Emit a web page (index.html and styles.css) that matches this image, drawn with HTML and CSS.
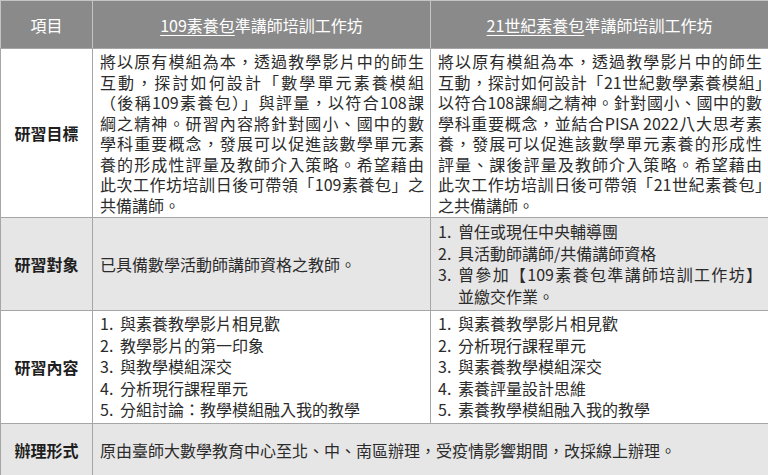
FILE: index.html
```html
<!DOCTYPE html>
<html lang="zh-Hant">
<head>
<meta charset="utf-8">
<title>素養包準講師培訓工作坊</title>
<link rel="stylesheet" href="styles.css">
</head>
<body>
<table class="grid">
  <colgroup>
    <col class="c-label">
    <col class="c-main">
    <col class="c-main">
  </colgroup>
  <thead>
    <tr class="r-head">
      <th>項目</th>
      <th><span class="ul">109素養包</span>準講師培訓工作坊</th>
      <th><span class="ul">21世紀素養包</span>準講師培訓工作坊</th>
    </tr>
  </thead>
  <tbody>
    <tr class="r-goal">
      <td class="label">研習目標</td>
      <td class="para">
        <span class="ln">將以原有模組為本，透過教學影片中的師生</span>
        <span class="ln">互動，探討如何設計「數學單元素養模組</span>
        <span class="ln">（後稱109素養包）」與評量，以符合108課</span>
        <span class="ln">綱之精神。研習內容將針對國小、國中的數</span>
        <span class="ln">學科重要概念，發展可以促進該數學單元素</span>
        <span class="ln">養的形成性評量及教師介入策略。希望藉由</span>
        <span class="ln">此次工作坊培訓日後可帶領「109素養包」之</span>
        <span class="ln last">共備講師。</span>
      </td>
      <td class="para">
        <span class="ln">將以原有模組為本，透過教學影片中的師生</span>
        <span class="ln">互動，探討如何設計「21世紀數學素養模組<span class="hang">」</span></span>
        <span class="ln">以符合108課綱之精神。針對國小、國中的數</span>
        <span class="ln">學科重要概念，並結合PISA 2022八大思考素</span>
        <span class="ln">養，發展可以促進該數學單元素養的形成性</span>
        <span class="ln">評量、課後評量及教師介入策略。希望藉由</span>
        <span class="ln">此次工作坊培訓日後可帶領「21世紀素養包<span class="hang">」</span></span>
        <span class="ln last">之共備講師。</span>
      </td>
    </tr>
    <tr class="r-target shade">
      <td class="label">研習對象</td>
      <td>已具備數學活動師講師資格之教師。</td>
      <td>
        <ol class="items">
          <li><span class="txt">曾任或現任中央輔導團</span></li>
          <li><span class="txt">具活動師講師/共備講師資格</span></li>
          <li><span class="txt"><span class="ln">曾參加【109素養包準講師培訓工作坊】</span><span class="ln last">並繳交作業。</span></span></li>
        </ol>
      </td>
    </tr>
    <tr class="r-content">
      <td class="label">研習內容</td>
      <td>
        <ol class="items">
          <li><span class="txt">與素養教學影片相見歡</span></li>
          <li><span class="txt">教學影片的第一印象</span></li>
          <li><span class="txt">與教學模組深交</span></li>
          <li><span class="txt">分析現行課程單元</span></li>
          <li><span class="txt">分組討論：教學模組融入我的教學</span></li>
        </ol>
      </td>
      <td>
        <ol class="items">
          <li><span class="txt">與素養教學影片相見歡</span></li>
          <li><span class="txt">分析現行課程單元</span></li>
          <li><span class="txt">與素養教學模組深交</span></li>
          <li><span class="txt">素養評量設計思維</span></li>
          <li><span class="txt">素養教學模組融入我的教學</span></li>
        </ol>
      </td>
    </tr>
    <tr class="r-form shade">
      <td class="label">辦理形式</td>
      <td colspan="2">原由臺師大數學教育中心至北、中、南區辦理，受疫情影響期間，改採線上辦理。</td>
    </tr>
  </tbody>
</table>
</body>
</html>
```

FILE: styles.css
```css
html, body {
  margin: 0;
  padding: 0;
  background: #ffffff;
}

body {
  font-family: "Noto Sans CJK TC", "Noto Sans", sans-serif;
  font-size: 16px;
  color: #2b2b2b;
}

.grid {
  width: 768px;
  border-collapse: collapse;
  table-layout: fixed;
}

.c-label {
  width: 92px;
}

.c-main {
  width: 338px;
}

.grid th {
  background: #8a8a8a;
  color: #ffffff;
  font-weight: normal;
  font-size: 16px;
  line-height: 20px;
  text-align: center;
  vertical-align: middle;
  border: 1px solid #c4c4c4;
  border-bottom-color: #a6a6a6;
  padding: 0;
}

.ul {
  text-decoration: underline;
  text-underline-offset: 3px;
  text-decoration-thickness: 1px;
}

.grid td {
  border: 1px solid #a6a6a6;
  padding: 2px 6px 2px 7px;
  line-height: 20.5px;
  vertical-align: middle;
  text-align: left;
}

.grid td.label {
  font-weight: bold;
  text-align: center;
  padding: 0;
  color: #1e1e1e;
}

.r-head { height: 48px; }
.r-goal { height: 168px; }
.r-target { height: 93px; }
.r-content { height: 111px; }
.r-form { height: 55px; }

.shade td {
  background: #e7e6e6;
}

.ln {
  display: block;
  text-align: justify;
  text-align-last: justify;
  white-space: nowrap;
}

.ln.last {
  text-align: left;
  text-align-last: left;
}

.hang {
  margin-right: -9px;
}

.items {
  margin: 0;
  padding: 0;
  list-style: none;
  counter-reset: item;
  line-height: 21.5px;
}

.items li {
  display: flex;
  counter-increment: item;
}

.items li::before {
  content: counter(item) ".";
  flex: 0 0 20px;
  width: 20px;
}

.items .txt {
  flex: 1 1 auto;
  min-width: 0;
}
```
